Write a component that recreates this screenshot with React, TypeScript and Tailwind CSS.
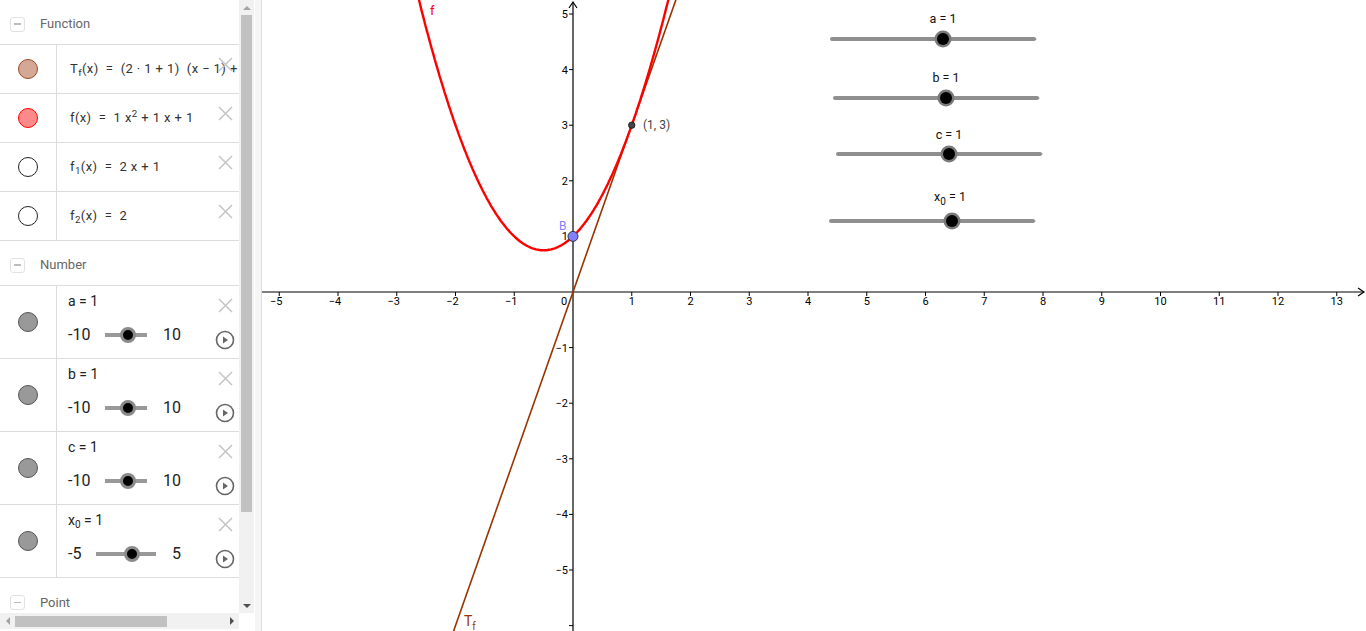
import React from 'react';

const OX = 573;
const OY = 292;
const UX = 58.75;
const UY = 55.6;

const px = (x: number) => OX + x * UX;
const py = (y: number) => OY - y * UY;

const minus = (n: number) => (n < 0 ? `\u2212${-n}` : `${n}`);

const Header = ({ label, last }: { label: string; last?: boolean }) => (
  <div
    className={`flex h-[45px] shrink-0 items-center pl-[10px] pt-[4px] ${last ? '' : 'border-b border-[#dcdcdc]'}`}
  >
    <div className="flex h-[15px] w-[15px] items-center justify-center rounded-[3px] border border-[#e2e2e2]">
      <div className="h-[1.5px] w-[7px] bg-[#bdbdbd]" />
    </div>
    <span className="ml-[15px] text-[13px] text-[#666]">{label}</span>
  </div>
);

const XIcon = () => (
  <svg width="15" height="15" viewBox="0 0 15 15">
    <path d="M1 1 L14 14 M14 1 L1 14" stroke="#c4c4c4" strokeWidth="1.5" />
  </svg>
);

const PlayIcon = () => (
  <svg width="20" height="20" viewBox="0 0 20 20">
    <circle cx="10" cy="10" r="8.5" fill="none" stroke="#666" strokeWidth="1.6" />
    <path d="M8 6.5 L13 10 L8 13.5 Z" fill="#666" />
  </svg>
);

const Dot = ({ fill, border }: { fill: string; border: string }) => (
  <div
    className="h-[20px] w-[20px] rounded-full border"
    style={{ backgroundColor: fill, borderColor: border }}
  />
);

const FuncRow = ({
  fill,
  border,
  children
}: {
  fill: string;
  border: string;
  children: React.ReactNode;
}) => (
  <div className="relative flex h-[49px] shrink-0 border-b border-[#dcdcdc]">
    <div className="flex w-[57px] shrink-0 items-center justify-center border-r border-[#dcdcdc]">
      <Dot fill={fill} border={border} />
    </div>
    <div className="flex min-w-0 flex-1 items-center overflow-hidden whitespace-nowrap pl-[13px] text-[13px] tracking-[0.4px] text-[#333]">
      {children}
    </div>
    <div className="absolute right-[6px] top-[12px]">
      <XIcon />
    </div>
  </div>
);

const NumRow = ({
  label,
  min,
  max,
  value,
  minW,
  trackW
}: {
  label: React.ReactNode;
  min: number;
  max: number;
  value: number;
  minW: number;
  trackW: number;
}) => {
  const knob = ((value - min) / (max - min)) * trackW;
  return (
    <div className="relative flex h-[73px] shrink-0 border-b border-[#dcdcdc]">
      <div className="flex w-[57px] shrink-0 items-center justify-center border-r border-[#dcdcdc]">
        <Dot fill="#999999" border="#555555" />
      </div>
      <div className="flex flex-1 flex-col pl-[11px] pt-[5px] text-[#222]">
        <div className="h-[20px] text-[14px] leading-[20px]">{label}</div>
        <div className="mt-[10px] flex h-[28px] items-center text-[16px]">
          <span style={{ width: minW }}>{min}</span>
          <div className="relative h-[4px] bg-[#999]" style={{ width: trackW }}>
            <div
              className="absolute top-[-6px] h-[16px] w-[16px] rounded-full border-[3px] border-[#8a8a8a] bg-black"
              style={{ left: knob - 8 }}
            />
          </div>
          <span className="ml-[16px]">{max}</span>
        </div>
      </div>
      <div className="absolute right-[6px] top-[12px]">
        <XIcon />
      </div>
      <div className="absolute right-[4px] top-[44px]">
        <PlayIcon />
      </div>
    </div>
  );
};

const AlgebraView = () => (
  <div className="flex h-full w-[254px] shrink-0 flex-col">
    <div className="flex min-h-0 flex-1">
      <div className="flex w-[239px] flex-col overflow-hidden">
        <Header label="Function" />
        <FuncRow fill="#d4a894" border="#9c4a26">
          <span>
            T<sub>f</sub>(x)&nbsp;&nbsp;=&nbsp;&nbsp;(2 · 1 + 1)&nbsp;&nbsp;(x − 1) + 3
          </span>
        </FuncRow>
        <FuncRow fill="#ff8a8a" border="#ff0000">
          <span>
            f(x)&nbsp;&nbsp;=&nbsp;&nbsp;1 x<sup>2</sup> + 1 x + 1
          </span>
        </FuncRow>
        <FuncRow fill="#ffffff" border="#222222">
          <span>
            f<sub>1</sub>(x)&nbsp;&nbsp;=&nbsp;&nbsp;2 x + 1
          </span>
        </FuncRow>
        <FuncRow fill="#ffffff" border="#222222">
          <span>
            f<sub>2</sub>(x)&nbsp;&nbsp;=&nbsp;&nbsp;2
          </span>
        </FuncRow>
        <Header label="Number" />
        <NumRow label="a = 1" min={-10} max={10} value={1} minW={37} trackW={42} />
        <NumRow label="b = 1" min={-10} max={10} value={1} minW={37} trackW={42} />
        <NumRow label="c = 1" min={-10} max={10} value={1} minW={37} trackW={42} />
        <NumRow
          label={
            <span>
              x<sub className="text-[10px]">0</sub> = 1
            </span>
          }
          min={-5}
          max={5}
          value={1}
          minW={28}
          trackW={60}
        />
        <Header label="Point" last />
      </div>
      <div className="flex w-[15px] shrink-0 flex-col items-center bg-[#f1f1f1]">
        <div className="flex h-[15px] items-center justify-center">
          <div className="h-0 w-0 border-x-[4px] border-b-[4px] border-x-transparent border-b-[#a3a3a3]" />
        </div>
        <div className="h-[497px] w-[11px] bg-[#c1c1c1]" />
        <div className="flex-1" />
        <div className="flex h-[15px] items-center justify-center">
          <div className="h-0 w-0 border-x-[4px] border-t-[4px] border-x-transparent border-t-[#505050]" />
        </div>
      </div>
    </div>
    <div className="flex h-[18px] shrink-0">
      <div className="flex h-[16px] w-[239px] items-center bg-[#f1f1f1]">
        <div className="flex w-[15px] justify-center">
          <div className="h-0 w-0 border-y-[4px] border-r-[4px] border-y-transparent border-r-[#a3a3a3]" />
        </div>
        <div className="h-[11px] w-[152px] bg-[#c1c1c1]" />
        <div className="flex-1" />
        <div className="flex w-[15px] justify-center">
          <div className="h-0 w-0 border-y-[4px] border-l-[4px] border-y-transparent border-l-[#505050]" />
        </div>
      </div>
    </div>
  </div>
);

const sliders = [
  { label: 'a', x1: 832, x2: 1037, y: 39, k: 943, ly: 23 },
  { label: 'b', x1: 835, x2: 1040, y: 98, k: 946, ly: 82 },
  { label: 'c', x1: 838, x2: 1043, y: 154, k: 949, ly: 139 },
  { label: 'x0', x1: 831, x2: 1036, y: 221, k: 952, ly: 201 }
];

const GraphicsView = () => {
  const parab: string[] = [];
  for (let x = -2.75; x <= 1.75; x += 0.02) {
    const y = x * x + x + 1;
    parab.push(`${parab.length ? 'L' : 'M'}${px(x).toFixed(1)} ${py(y).toFixed(1)}`);
  }
  const xTicks = Array.from({ length: 19 }, (_, i) => i - 5);
  const yTicks = [-6, -5, -4, -3, -2, -1, 1, 2, 3, 4, 5];
  return (
    <div className="relative h-full flex-1 overflow-hidden bg-white">
      <svg
        width="1104"
        height="631"
        viewBox="262 0 1104 631"
        className="block"
        fontFamily="Roboto, 'Liberation Sans', sans-serif"
      >
        {/* axes */}
        <line x1="262" y1={OY} x2="1364" y2={OY} stroke="#000" strokeWidth="1.2" />
        <path d={`M1358 ${OY - 4} L1364 ${OY} L1358 ${OY + 4}`} fill="none" stroke="#000" strokeWidth="1.2" />
        <line x1={OX} y1="631" x2={OX} y2="2" stroke="#000" strokeWidth="1.2" />
        <path d={`M${OX - 4} 8 L${OX} 2 L${OX + 4} 8`} fill="none" stroke="#000" strokeWidth="1.2" />
        {xTicks.map((i) => (
          <g key={`x${i}`}>
            {i !== 0 && <line x1={px(i)} y1={OY} x2={px(i)} y2={OY + 4} stroke="#000" />}
            {i !== 0 && (
              <text x={px(i) - (i < 0 ? 3 : 0)} y={OY + 13} fontSize="11" textAnchor="middle" fill="#000">
                {minus(i)}
              </text>
            )}
          </g>
        ))}
        <text x={OX - 9} y={OY + 13} fontSize="11" textAnchor="middle" fill="#000">
          0
        </text>
        {yTicks.map((i) => (
          <g key={`y${i}`}>
            <line x1={OX - 4} y1={py(i)} x2={OX} y2={py(i)} stroke="#000" />
            {i > -6 && (
              <text x={OX - 5} y={py(i) + 4} fontSize="11" textAnchor="end" fill="#000">
                {minus(i)}
              </text>
            )}
          </g>
        ))}

        {/* tangent Tf(x) = 3x */}
        <line x1={px(-2.1)} y1={py(-6.3)} x2={px(1.8)} y2={py(5.4)} stroke="#993300" strokeWidth="1.6" />
        {/* f */}
        <path d={parab.join(' ')} fill="none" stroke="#ff0000" strokeWidth="2.4" />

        <text x="430" y="15" fontSize="13" fill="#ff0000">
          f
        </text>
        <text x="464" y="626" fontSize="14" fill="#993300">
          T
          <tspan fontSize="10" dy="4">
            f
          </tspan>
        </text>

        {/* point B */}
        <circle cx={OX} cy={py(1)} r="5" fill="#8080ff" stroke="#333" strokeWidth="1" />
        <text x="559" y="230" fontSize="12" fill="#7f7fff">
          B
        </text>
        {/* (1,3) */}
        <circle cx={px(1)} cy={py(3)} r="3.2" fill="#444" stroke="#111" strokeWidth="0.8" />
        <text x="643" y="129" fontSize="12" fill="#444">
          (1, 3)
        </text>

        {/* sliders */}
        {sliders.map((s) => (
          <g key={s.label}>
            <line x1={s.x1} y1={s.y} x2={s.x2 - 3} y2={s.y} stroke="#8f8f8f" strokeWidth="4" strokeLinecap="round" />
            <path d={`M${s.x2 - 4} ${s.y - 2} L${s.x2} ${s.y} L${s.x2 - 4} ${s.y + 2} Z`} fill="#8f8f8f" />
            <circle cx={s.k} cy={s.y} r="8.5" fill="#7a7a7a" />
            <circle cx={s.k} cy={s.y} r="6" fill="#000" />
            {s.label === 'x0' ? (
              <text x={s.k - 2} y={s.ly} fontSize="12.5" textAnchor="middle" fill="#111">
                x
                <tspan fontSize="10" dy="4">
                  0
                </tspan>
                <tspan dy="-4"> = 1</tspan>
              </text>
            ) : (
              <text x={s.k} y={s.ly} fontSize="12.5" textAnchor="middle" fill="#111">
                {s.label} = 1
              </text>
            )}
          </g>
        ))}
      </svg>
    </div>
  );
}

export default function App() {
  return (
    <div className="flex h-[631px] w-[1366px] overflow-hidden bg-white font-['Roboto','Liberation_Sans',sans-serif]">
      <AlgebraView />
      <div className="h-full w-[8px] shrink-0 border-l border-r border-l-white border-r-[#dedede] bg-[#f5f5f5]" />
      <GraphicsView />
    </div>
  );
}
